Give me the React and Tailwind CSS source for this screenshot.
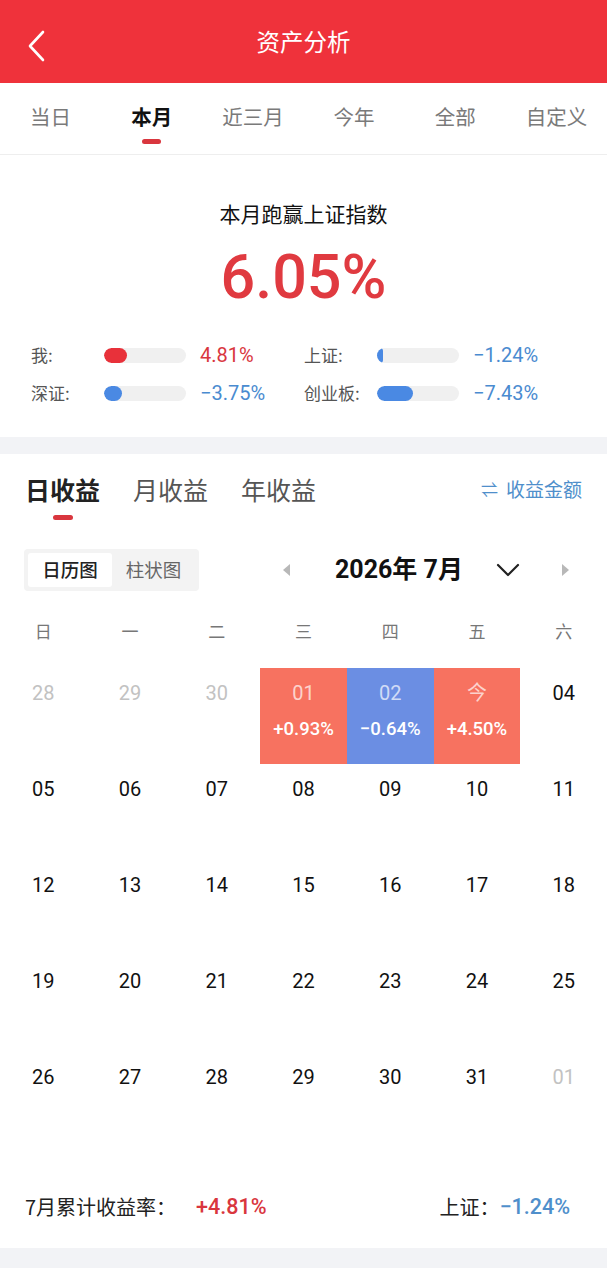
import React from "react";

const cn = { fontFamily: '"Noto Sans CJK SC", "Noto Sans", sans-serif' };
const num = { fontFamily: 'Roboto, "Noto Sans CJK SC", sans-serif' };

const tabs = ["当日", "本月", "近三月", "今年", "全部", "自定义"];
const weekdays = ["日", "一", "二", "三", "四", "五", "六"];

// 对比条：标签 + 进度条 + 数值
function CompareRow({ label, fill, color, value, up }) {
    return (
        <div className="flex items-center h-[38px]">
            <div className="w-[73px] text-[17px] text-[#555]" style={cn}>{label}</div>
            <div className="w-[82px] h-[15px] rounded-full bg-[#f0f0f0] overflow-hidden">
                <div className={`h-full rounded-full ${color}`} style={{ width: fill }} />
            </div>
            <div className={`ml-[14px] text-[20px] ${up ? "text-[#d9363e]" : "text-[#4a8bd0]"}`} style={num}>{value}</div>
        </div>
    );
}

function Cell({ day, muted, bg, rate }) {
    if (bg) {
        return (
            <div className={`h-[96px] flex flex-col items-center ${bg}`}>
                <div className="mt-[10px] text-[20px] text-white/70" style={num}>{day}</div>
                <div className="mt-[8px] text-[18.5px] text-white font-medium" style={num}>{rate}</div>
            </div>
        );
    }
    return (
        <div className="h-[96px] flex flex-col items-center">
            <div className={`mt-[10px] text-[20px] ${muted ? "text-[#c2c2c2]" : "text-[#111]"}`} style={num}>{day}</div>
        </div>
    );
}

export default function App() {
    const days = [
        { day: "28", muted: true },
        { day: "29", muted: true },
        { day: "30", muted: true },
        { day: "01", bg: "bg-[#f77260]", rate: "+0.93%" },
        { day: "02", bg: "bg-[#6b8ee3]", rate: "−0.64%" },
        { day: "今", bg: "bg-[#f77260]", rate: "+4.50%" },
        { day: "04" },
    ];
    for (let d = 5; d <= 31; d++) days.push({ day: String(d).padStart(2, "0") });
    days.push({ day: "01", muted: true });

    return (
        <div className="w-[607px] min-h-[1280px] bg-white" style={cn}>
            {/* 顶栏 */}
            <div className="h-[83px] bg-[#ef323b] flex items-center justify-center relative">
                <svg className="absolute left-[25px] top-[29px]" width="22" height="34" viewBox="0 0 22 34">
                    <path d="M18 3 L5 17 L18 31" stroke="#fff" strokeWidth="2.6" fill="none" strokeLinecap="round" strokeLinejoin="round" />
                </svg>
                <div className="text-white text-[23.5px]">资产分析</div>
            </div>

            {/* 时间段切换 */}
            <div className="h-[72px] grid grid-cols-6 border-b border-[#eee]">
                {tabs.map((t) => (
                    <div key={t} className="flex flex-col items-center pt-[18px]">
                        <div className={`text-[20.5px] leading-[30px] ${t === "本月" ? "text-[#111] font-bold" : "text-[#7a7a7a]"}`}>{t}</div>
                        {t === "本月" && <div className="mt-[8px] w-[19px] h-[5px] rounded-full bg-[#d9363e]" />}
                    </div>
                ))}
            </div>

            {/* 跑赢指数 */}
            <div className="h-[282px] flex flex-col">
                <div className="mt-[43px] text-center text-[21px] leading-[30px] text-[#111]">本月跑赢上证指数</div>
                <div className="mt-[13px] text-center text-[61px] leading-[72px] text-[#e03a40] font-medium" style={num}>6.05%</div>
                <div className="mt-[23px] grid grid-cols-[273px_1fr] pl-[31px]">
                    <CompareRow label="我:" fill="28%" color="bg-[#e8313a]" value="4.81%" up />
                    <CompareRow label="上证:" fill="7%" color="bg-[#4a89e3]" value="−1.24%" />
                    <CompareRow label="深证:" fill="22%" color="bg-[#4a89e3]" value="−3.75%" />
                    <CompareRow label="创业板:" fill="44%" color="bg-[#4a89e3]" value="−7.43%" />
                </div>
            </div>

            <div className="h-[17px] bg-[#f2f3f6]" />

            {/* 收益日历 */}
            <div className="flex items-start justify-between px-[25px] pt-[19px] h-[76px]">
                <div className="flex gap-[33px]">
                    <div className="flex flex-col items-center">
                        <div className="text-[25px] leading-[32px] font-bold text-[#222]">日收益</div>
                        <div className="mt-[10px] w-[20px] h-[5px] rounded-full bg-[#d9363e]" />
                    </div>
                    <div className="text-[25px] leading-[32px] text-[#555]">月收益</div>
                    <div className="text-[25px] leading-[32px] text-[#555]">年收益</div>
                </div>
                <div className="flex items-center gap-[8px] text-[19px] leading-[32px] text-[#4f8fcb]">
                    <span className="text-[17px]">⇌</span>
                    <span>收益金额</span>
                </div>
            </div>

            <div className="flex items-center justify-between pl-[24px] pr-[37px] mt-[19px] h-[42px]">
                <div className="w-[175px] h-[42px] rounded-[4px] bg-[#f3f3f3] p-[4px] flex">
                    <div className="w-[84px] rounded-[3px] bg-white flex items-center justify-center text-[18.5px] font-medium text-[#222]">日历图</div>
                    <div className="flex-1 flex items-center justify-center text-[18.5px] text-[#666]">柱状图</div>
                </div>
                <div className="flex items-center">
                    <svg width="8" height="16" viewBox="0 0 8 16" className="mr-[45px]">
                        <path d="M8 2 L1 8 L8 14 Z" fill="#b8b8b8" />
                    </svg>
                    <div className="w-[130px] text-[25px] font-bold text-[#111] whitespace-nowrap" style={num}>2026年 7月</div>
                    <svg width="24" height="16" viewBox="0 0 24 16" className="ml-[31px]">
                        <path d="M2 3 L12 13 L22 3" stroke="#222" strokeWidth="2.2" fill="none" strokeLinecap="round" strokeLinejoin="round" />
                    </svg>
                    <svg width="8" height="16" viewBox="0 0 8 16" className="ml-[42px]">
                        <path d="M0 2 L7 8 L0 14 Z" fill="#b8b8b8" />
                    </svg>
                </div>
            </div>

            <div className="grid grid-cols-7 mt-[25px] h-[52px]">
                {weekdays.map((w) => (
                    <div key={w} className="text-center text-[17px] text-[#777] leading-[30px]">{w}</div>
                ))}
            </div>

            <div className="grid grid-cols-7">
                {days.map((d, i) => (
                    <Cell key={i} {...d} />
                ))}
            </div>

            {/* 月度汇总 */}
            <div className="flex items-center justify-between pl-[25px] pr-[37px] mt-[44px] h-[30px] text-[20px]">
                <div className="flex items-center">
                    <span className="text-[#222]">7月累计收益率：</span>
                    <span className="ml-[20px] text-[21.5px] text-[#d9363e] font-medium" style={num}>+4.81%</span>
                </div>
                <div className="flex items-center">
                    <span className="text-[#222]">上证：</span>
                    <span className="text-[21.5px] text-[#4f8fcb] font-medium" style={num}>−1.24%</span>
                </div>
            </div>

            <div className="mt-[26px] h-[20px] bg-[#f2f3f6]" />
        </div>
    );
}
